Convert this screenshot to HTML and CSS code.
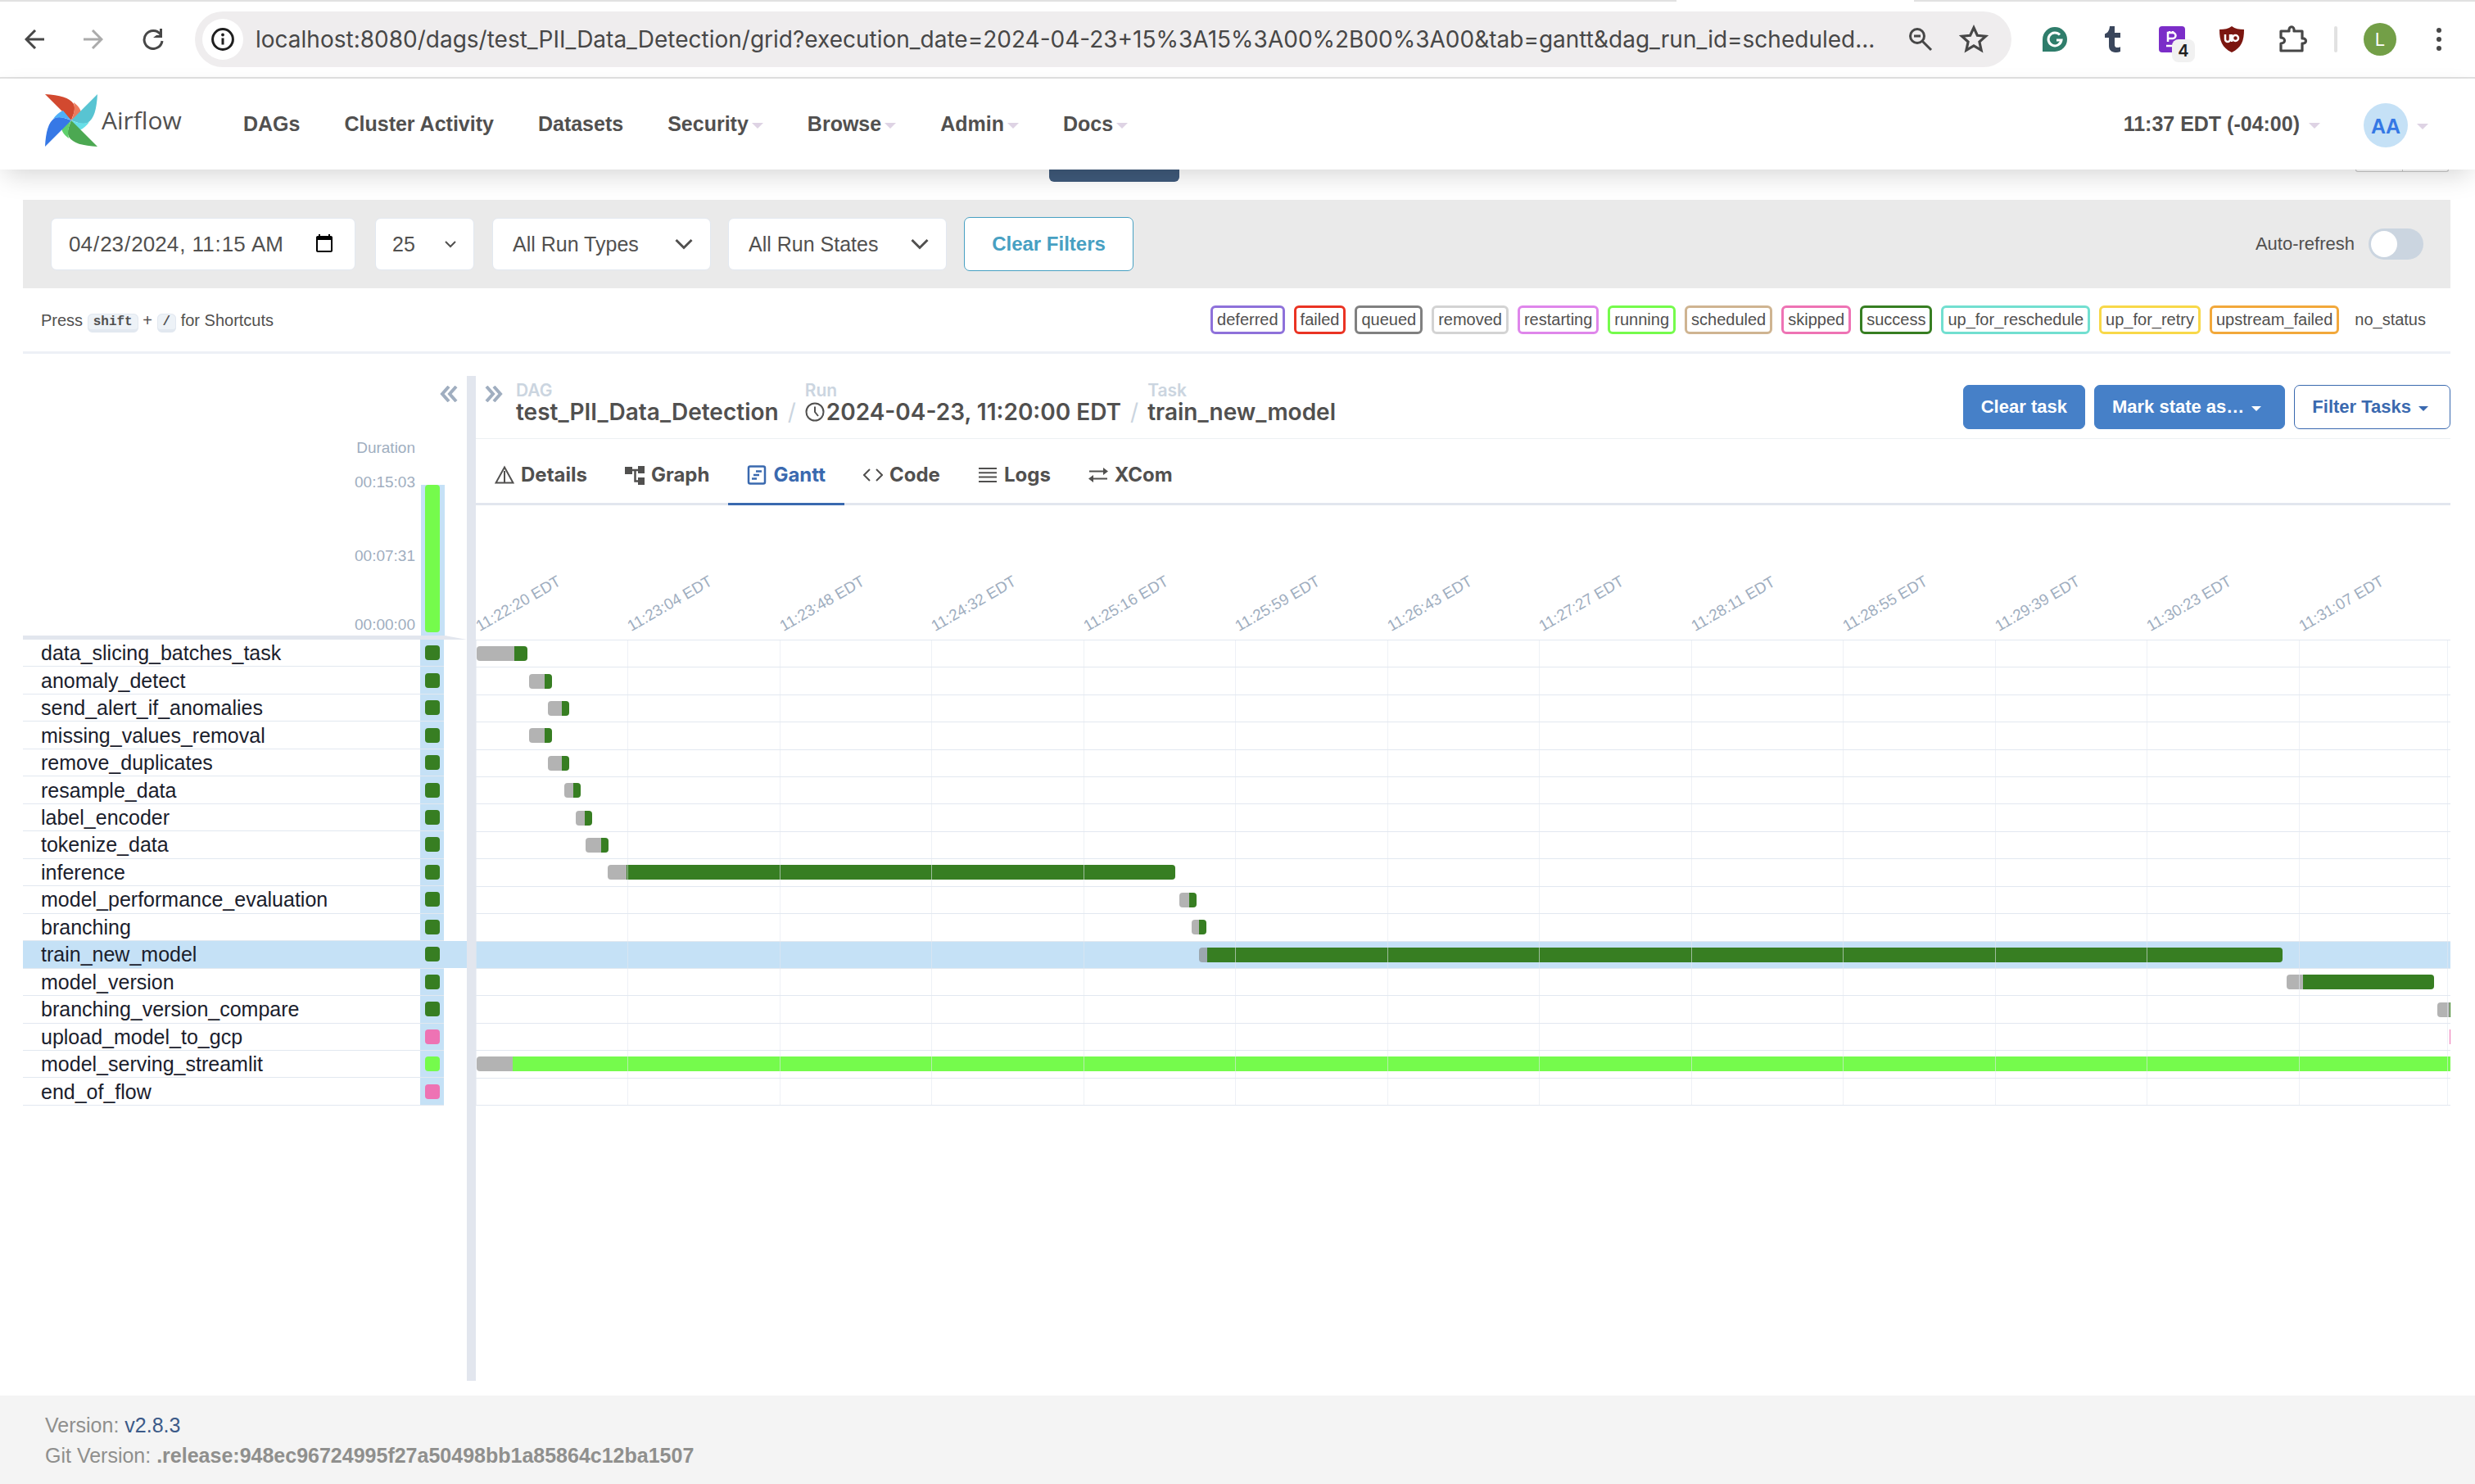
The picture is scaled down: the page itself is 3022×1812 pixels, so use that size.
FILE: index.html
```html
<!DOCTYPE html>
<html lang="en">
<head>
<meta charset="utf-8">
<title>test_PII_Data_Detection - Grid - Airflow</title>
<link rel="stylesheet" href="styles.css">
</head>
<body>
<div class="tabstrip"><span class="tabstrip-gap"></span></div>
<div class="browser">
  <div class="browser-nav">
    <button class="icon-btn" aria-label="Back"><svg width="24" height="24" viewBox="0 0 24 24"><path d="M13 1 2 12l11 11M2 12h22" fill="none" stroke="#474747" stroke-width="3"/></svg></button>
    <button class="icon-btn" aria-label="Forward"><svg width="24" height="24" viewBox="0 0 24 24"><path d="M11 1l11 11-11 11M22 12H0" fill="none" stroke="#ababab" stroke-width="3"/></svg></button>
    <button class="icon-btn" aria-label="Reload"><svg width="26" height="26" viewBox="0 0 26 26"><path d="M22 7a11 11 0 1 0 2 8" fill="none" stroke="#474747" stroke-width="3"/><path d="M24 0v11H13l4-3h4V0z" fill="#474747"/></svg></button>
  </div>
  <div class="omnibox">
    <button class="site-info" aria-label="Site information"><svg width="28" height="28" viewBox="0 0 28 28"><circle cx="14" cy="14" r="12.4" fill="none" stroke="#1f1f1f" stroke-width="3"/><path d="M14 12.500v8" stroke="#1f1f1f" stroke-width="3"/><circle cx="14" cy="8.500" r="1.900" fill="#1f1f1f"/></svg></button>
    <input class="url" type="text" aria-label="Address" value="localhost:8080/dags/test_PII_Data_Detection/grid?execution_date=2024-04-23+15%3A15%3A00%2B00%3A00&amp;tab=gantt&amp;dag_run_id=scheduled...">
    <button class="icon-btn" aria-label="Zoom"><svg width="30" height="30" viewBox="0 0 30 30"><circle cx="11" cy="11" r="8.500" fill="none" stroke="#474747" stroke-width="3"/><path d="M17 17l11 11M7 11h8" stroke="#474747" stroke-width="3"/></svg></button>
    <button class="icon-btn" aria-label="Bookmark"><svg width="36" height="36" viewBox="0 0 24 24"><path d="M12 2.500l2.900 6.300 6.800.7-5.100 4.600 1.500 6.800L12 17.300l-6.100 3.600 1.500-6.800-5.100-4.600 6.800-.7z" fill="none" stroke="#474747" stroke-width="2.100"/></svg></button>
  </div>
  <div class="extensions">
    <svg width="30" height="30" viewBox="0 0 30 30"><path d="M15 0a15 15 0 1 1 0 30H0V15A15 15 0 0 1 15 0z" fill="#2f7d6b"/><path d="M21 9.500a8 8 0 1 0 2 6.500h-6" fill="none" stroke="#fff" stroke-width="3"/></svg>
    <svg width="20" height="32" viewBox="0 0 20 32"><path d="M6 0h6v8h7v6h-7v9c0 3 3 4 7 2.200V31c-7 2.500-14 .5-14-7V14H0V9.500C4 8 5.500 5 6 0z" fill="#3a465c"/></svg>
    <span class="ext-badge">
      <svg width="32" height="32" viewBox="0 0 32 32"><rect width="32" height="32" rx="4" fill="#7b2dc8"/><path d="M11 19V8h6a3.500 3.500 0 0 1 0 7h-6M9 24h8M13 6v3M17 6v3" fill="none" stroke="#fff" stroke-width="2.500"/></svg>
      <span class="ext-count">4</span>
    </span>
    <svg class="ext-shield" width="30" height="32" viewBox="0 0 30 32"><path d="M15 0c4 3 9 4 15 4 0 14-3 22-15 28C3 26 0 18 0 4c6 0 11-1 15-4z" fill="#7b1610"/><path d="M7 10v6a3 3 0 0 0 6 0v-6M15 19V10" fill="none" stroke="#fff" stroke-width="2.500"/><circle cx="19.500" cy="14.500" r="3.500" fill="none" stroke="#fff" stroke-width="2.500"/></svg>
    <svg width="36" height="34" viewBox="0 0 36 34"><path d="M3 7h10c-1-7 7-7 6 0h10v9c6-1 6 7 0 6v9H3v-9c6 0 6-7 0-7z" fill="none" stroke="#474747" stroke-width="3.200" stroke-linejoin="round"/></svg>
    <span class="ext-sep"></span>
    <span class="profile">L</span>
    <svg width="6" height="30" viewBox="0 0 6 30"><circle cx="3" cy="4" r="3" fill="#474747"/><circle cx="3" cy="15" r="3" fill="#474747"/><circle cx="3" cy="26" r="3" fill="#474747"/></svg>
  </div>
</div>

<header class="navbar">
  <a class="brand" href="#">
    <svg width="64" height="64" viewBox="0 0 64 64">
      <path d="M0 0c18 1 30 4 35 12 3 7-1 14-3 20z" fill="#d2492f"/><path d="M35 10c4 3 8 7 9 12l-12 10c3-7 5-13 3-22z" fill="#ee7a5c"/>
      <path d="M64 0c-1 18-4 30-12 35-7 3-14-1-20-3z" fill="#58c4d2"/><path d="M54 34c-3 4-7 8-12 10L32 32c7 3 14 5 22 2z" fill="#66dfe8"/>
      <path d="M64 64c-18-1-30-4-35-12-3-7 1-14 3-20z" fill="#4ca852"/><path d="M29 54c-4-3-8-7-9-12l12-10c-3 7-5 13-3 22z" fill="#5fd06c"/>
      <path d="M0 64c1-18 4-30 12-35 7-3 14 1 20 3z" fill="#3678e6"/><path d="M10 30c3-4 7-8 12-10l10 12c-7-3-14-5-22-2z" fill="#4fb0f8"/>
    </svg>
    <span>Airflow</span>
  </a>
  <nav class="menu">
    <a href="#">DAGs</a>
    <a href="#">Cluster Activity</a>
    <a href="#">Datasets</a>
    <a href="#">Security<i class="caret"></i></a>
    <a href="#">Browse<i class="caret"></i></a>
    <a href="#">Admin<i class="caret"></i></a>
    <a href="#">Docs<i class="caret"></i></a>
  </nav>
  <a class="clock" href="#">11:37 EDT (-04:00)<i class="caret"></i></a>
  <a class="user" href="#"><span class="avatar">AA</span><i class="caret"></i></a>
</header>

<div class="scrolled-under">
  <span class="under-button"></span>
  <span class="under-group"><span></span><span></span></span>
</div>

<main class="page">
  <form class="filters">
    <input class="field date" type="datetime-local" aria-label="Base date" value="2024-04-23T11:15">
    <span class="select-wrap count"><select class="field" aria-label="Number of runs"><option>25</option></select>
      <svg class="chev" width="14" height="10" viewBox="0 0 14 10"><path d="M1 2l6 6 6-6" fill="none" stroke="#51504f" stroke-width="2"/></svg></span>
    <span class="select-wrap kind"><select class="field" aria-label="Run types"><option>All Run Types</option></select>
      <svg class="chev" width="22" height="14" viewBox="0 0 22 14"><path d="M1.500 2l9.500 9.500L20.500 2" fill="none" stroke="#51504f" stroke-width="3"/></svg></span>
    <span class="select-wrap kind"><select class="field" aria-label="Run states"><option>All Run States</option></select>
      <svg class="chev" width="22" height="14" viewBox="0 0 22 14"><path d="M1.500 2l9.500 9.500L20.500 2" fill="none" stroke="#51504f" stroke-width="3"/></svg></span>
    <button class="clear-filters" type="button">Clear Filters</button>
    <label class="auto">Auto-refresh<input class="switch" type="checkbox"></label>
  </form>

  <div class="legend">
    <p class="shortcuts">Press <kbd>shift</kbd> + <kbd>/</kbd> for Shortcuts</p>
    <span class="state deferred">deferred</span>
    <span class="state failed">failed</span>
    <span class="state queued">queued</span>
    <span class="state removed">removed</span>
    <span class="state restarting">restarting</span>
    <span class="state running">running</span>
    <span class="state scheduled">scheduled</span>
    <span class="state skipped">skipped</span>
    <span class="state success">success</span>
    <span class="state reschedule">up_for_reschedule</span>
    <span class="state retry">up_for_retry</span>
    <span class="state upstream">upstream_failed</span>
    <span class="state none">no_status</span>
  </div>

  <div class="panels">
    <section class="grid-panel">
      <div class="grid-head">
        <button class="icon-btn collapse" aria-label="Collapse grid"><svg width="22" height="20" viewBox="0 0 22 20"><path d="M11 1 3 10l8 9M20 1l-8 9 8 9" fill="none" stroke="#a0aec0" stroke-width="4"/></svg></button>
        <div class="duration">
          <div class="axis"><span class="axis-title">Duration</span><span class="axis-max">00:15:03</span><span class="axis-mid">00:07:31</span><span class="axis-min">00:00:00</span></div>
          <div class="run-col"><span class="run-bar"></span></div>
        </div>
      </div>
      <div class="rail"></div>
      <table class="tasks">
        <tr><td>data_slicing_batches_task</td><td><i class="sq"></i></td><td></td></tr>
        <tr><td>anomaly_detect</td><td><i class="sq"></i></td><td></td></tr>
        <tr><td>send_alert_if_anomalies</td><td><i class="sq"></i></td><td></td></tr>
        <tr><td>missing_values_removal</td><td><i class="sq"></i></td><td></td></tr>
        <tr><td>remove_duplicates</td><td><i class="sq"></i></td><td></td></tr>
        <tr><td>resample_data</td><td><i class="sq"></i></td><td></td></tr>
        <tr><td>label_encoder</td><td><i class="sq"></i></td><td></td></tr>
        <tr><td>tokenize_data</td><td><i class="sq"></i></td><td></td></tr>
        <tr><td>inference</td><td><i class="sq"></i></td><td></td></tr>
        <tr><td>model_performance_evaluation</td><td><i class="sq"></i></td><td></td></tr>
        <tr><td>branching</td><td><i class="sq"></i></td><td></td></tr>
        <tr class="selected"><td>train_new_model</td><td><i class="sq"></i></td><td></td></tr>
        <tr><td>model_version</td><td><i class="sq"></i></td><td></td></tr>
        <tr><td>branching_version_compare</td><td><i class="sq"></i></td><td></td></tr>
        <tr><td>upload_model_to_gcp</td><td><i class="sq is-skipped"></i></td><td></td></tr>
        <tr><td>model_serving_streamlit</td><td><i class="sq is-running"></i></td><td></td></tr>
        <tr><td>end_of_flow</td><td><i class="sq is-skipped"></i></td><td></td></tr>
      </table>
    </section>

    <div class="divider"></div>

    <section class="detail">
      <div class="detail-head">
        <button class="icon-btn expand" aria-label="Expand details"><svg width="22" height="20" viewBox="0 0 22 20"><path d="M2 1l8 9-8 9M11 1l8 9-8 9" fill="none" stroke="#a0aec0" stroke-width="4"/></svg></button>
        <div class="crumbs">
          <div class="crumb"><span>DAG</span><a href="#">test_PII_Data_Detection</a></div>
          <i class="slash">/</i>
          <div class="crumb"><span>Run</span><a href="#"><svg width="24" height="24" viewBox="0 0 24 24"><circle cx="12" cy="12" r="10.500" fill="none" stroke="#51504f" stroke-width="2"/><path d="M12 5.500V12l4 5" fill="none" stroke="#51504f" stroke-width="2"/></svg>2024-04-23, 11:20:00 EDT</a></div>
          <i class="slash">/</i>
          <div class="crumb"><span>Task</span><a href="#">train_new_model</a></div>
        </div>
        <div class="actions">
          <button class="btn solid">Clear task</button>
          <button class="btn solid">Mark state as…<i class="caret"></i></button>
          <button class="btn outline">Filter Tasks<i class="caret"></i></button>
        </div>
      </div>

      <div class="tabs">
        <button class="tab"><svg width="24" height="24" viewBox="0 0 24 24"><path d="M12 2.500 22.500 21.500h-21z" fill="none" stroke="#51504f" stroke-width="2"/><path d="M12 7v14" stroke="#51504f" stroke-width="2"/></svg>Details</button>
        <button class="tab"><svg width="24" height="24" viewBox="0 0 24 24"><path d="M0 2h9v9H0zM16 1h8v9h-8zM16 15h8v9h-8z" fill="#51504f"/><path d="M8 6h9M12.500 6v13.500H17" fill="none" stroke="#51504f" stroke-width="2.500"/></svg>Graph</button>
        <button class="tab active"><svg width="24" height="24" viewBox="0 0 24 24"><rect x="2" y="1.500" width="20" height="21" rx="2" fill="none" stroke="#3a69af" stroke-width="2.500"/><path d="M11 7.500h7M8 12h7M6 16.500h6" stroke="#3a69af" stroke-width="2.500"/></svg>Gantt</button>
        <button class="tab"><svg width="24" height="24" viewBox="0 0 24 24"><path d="M8 5l-7 7 7 7M16 5l7 7-7 7" fill="none" stroke="#51504f" stroke-width="2"/></svg>Code</button>
        <button class="tab"><svg width="24" height="24" viewBox="0 0 24 24"><path d="M1 4h22M1 9.300h22M1 14.600h22M1 20h22" stroke="#51504f" stroke-width="2"/></svg>Logs</button>
        <button class="tab"><svg width="24" height="24" viewBox="0 0 24 24"><path d="M1 7.500h19M23 16.500H4" stroke="#51504f" stroke-width="2"/><path d="M18 3l6 4.500-6 4.500zM6 12l-6 4.500L6 21z" fill="#51504f"/></svg>XCom</button>
      </div>

      <div class="gantt-axis">
        <span>11:22:20 EDT</span><span>11:23:04 EDT</span><span>11:23:48 EDT</span><span>11:24:32 EDT</span><span>11:25:16 EDT</span><span>11:25:59 EDT</span><span>11:26:43 EDT</span><span>11:27:27 EDT</span><span>11:28:11 EDT</span><span>11:28:55 EDT</span><span>11:29:39 EDT</span><span>11:30:23 EDT</span><span>11:31:07 EDT</span>
      </div>
      <div class="gantt">
        <div class="lane"><i class="wait" style="--from:1;--len:46"></i><i class="bar" style="--len:16"></i></div>
        <div class="lane"><i class="wait" style="--from:65;--len:19"></i><i class="bar" style="--len:9"></i></div>
        <div class="lane"><i class="wait" style="--from:88;--len:17"></i><i class="bar" style="--len:9"></i></div>
        <div class="lane"><i class="wait" style="--from:65;--len:19"></i><i class="bar" style="--len:9"></i></div>
        <div class="lane"><i class="wait" style="--from:88;--len:17"></i><i class="bar" style="--len:9"></i></div>
        <div class="lane"><i class="wait" style="--from:108;--len:11"></i><i class="bar" style="--len:9"></i></div>
        <div class="lane"><i class="wait" style="--from:122;--len:11"></i><i class="bar" style="--len:9"></i></div>
        <div class="lane"><i class="wait" style="--from:134;--len:19"></i><i class="bar" style="--len:9"></i></div>
        <div class="lane"><i class="wait" style="--from:161;--len:23"></i><i class="bar" style="--len:670"></i></div>
        <div class="lane"><i class="wait" style="--from:859;--len:12"></i><i class="bar" style="--len:9"></i></div>
        <div class="lane"><i class="wait" style="--from:874;--len:9"></i><i class="bar" style="--len:9"></i></div>
        <div class="lane selected"><i class="wait" style="--from:883;--len:10"></i><i class="bar" style="--len:1313"></i></div>
        <div class="lane"><i class="wait" style="--from:2211;--len:20"></i><i class="bar" style="--len:160"></i></div>
        <div class="lane"><i class="wait" style="--from:2395;--len:15"></i><i class="bar cut" style="--len:1"></i></div>
        <div class="lane"><i class="wait" style="--from:2410;--len:0"></i><i class="bar cut is-skipped" style="--len:1"></i></div>
        <div class="lane"><i class="wait" style="--from:1;--len:44"></i><i class="bar cut is-running" style="--len:2366"></i></div>
        <div class="lane"></div>
        <div class="ticks"><i></i><i></i><i></i><i></i><i></i><i></i><i></i><i></i><i></i><i></i><i></i><i></i><i></i></div>
      </div>
    </section>
  </div>
</main>

<footer class="footer">
  <div>Version: <a href="#">v2.8.3</a></div>
  <div>Git Version: <strong>.release:948ec96724995f27a50498bb1a85864c12ba1507</strong></div>
</footer>
</body>
</html>
```

FILE: styles.css
```css
:root {
  --text: #51504f;
  --line: #e2e8f0;
  --muted: #a0aec0;
  --pick: #c5e1f6;
  --success: #377e22;
  --running: #75fb4c;
  --skipped: #ee73b4;
  --ui: "Inter", "Liberation Sans", sans-serif;
}
* { box-sizing: border-box; }
body {
  margin: 0;
  min-height: 100vh;
  display: flex;
  flex-direction: column;
  background: #fff;
  color: var(--text);
  font: 25px/36px "Liberation Sans", Arial, sans-serif;
}
svg { display: block; flex: none; }
a { color: inherit; text-decoration: none; }
button, input, select { font: inherit; color: inherit; margin: 0; }
.icon-btn { padding: 0; border: 0; background: none; }

/* browser toolbar */
.tabstrip { height: 2px; background: #e1e1e1; display: flex; justify-content: flex-end; padding-right: 685px; }
.tabstrip-gap { width: 290px; background: #fff; }
.browser { height: 94px; border-bottom: 2px solid #e1e1e1; display: flex; align-items: center; padding: 0 41px 0 30px; }
.browser-nav { display: flex; align-items: center; gap: 48px; width: 208px; flex: none; }
.omnibox { flex: 1; height: 68px; border-radius: 34px; background: #efedee; display: flex; align-items: center; padding: 0 28px 0 9px; gap: 32px; }
.site-info { width: 50px; height: 50px; border: 0; border-radius: 50%; background: #fff; padding: 11px; margin-right: -17px; }
.url { flex: 1; min-width: 0; border: 0; padding: 0; background: none; color: #474747; font: 28px/36px var(--ui); }
.extensions { display: flex; align-items: center; gap: 46px; margin-left: 38px; }
.ext-badge { position: relative; margin-right: -4px; }
.ext-shield { margin-right: -4px; }
.ext-count { position: absolute; left: 16px; top: 16px; width: 28px; height: 28px; border-radius: 8px; background: #f1f1f1; color: #1f1f1f; font: 600 20px/28px var(--ui); text-align: center; }
.ext-sep { width: 4px; height: 32px; border-radius: 2px; background: #e1e1e1; margin: 0 -14px; }
.profile { width: 40px; height: 40px; margin-right: 3px; border-radius: 50%; background: #739f47; color: #fff; font: 22px/40px var(--ui); text-align: center; }

/* airflow navbar */
.navbar { position: relative; z-index: 2; height: 111px; background: #fff; display: flex; align-items: center; padding: 2px 57px 0 55px; font-weight: 700; line-height: 28px; box-shadow: 0 12px 30px -6px rgba(0, 0, 0, .17); }
.brand { display: flex; align-items: center; gap: 5px; width: 242px; padding-bottom: 12px; font: 400 30px/36px "Open Sans", "Noto Sans", sans-serif; }
.menu { display: flex; gap: 54px; flex: 1; }
.menu, .clock { padding-bottom: 3px; }
.menu a, .clock, .user { display: flex; align-items: center; }
.caret { border: 7px solid transparent; border-top-color: #ded3e4; border-bottom: 0; margin-left: 4px; margin-top: 4px; }
.clock .caret, .user .caret { margin-left: 11px; }
.user { margin-left: 53px; }
.avatar { width: 54px; height: 54px; border-radius: 50%; background: var(--pick); color: #3578e5; text-align: center; line-height: 56px; }

.scrolled-under { height: 37px; display: flex; justify-content: space-between; align-items: flex-start; padding: 0 32px 0 1281px; }
.under-button { width: 159px; height: 15px; border-radius: 0 0 6px 6px; background: #3f5a7b; }
.under-group { display: flex; width: 114px; height: 3px; border: 1px solid #c9c9c9; border-top: 0; border-radius: 0 0 5px 5px; }
.under-group span { flex: 1; }
.under-group span + span { border-left: 1px solid #c9c9c9; }

.page { flex: 1; display: flex; flex-direction: column; padding: 0 30px 18px 28px; }

/* filter bar */
.filters { height: 108px; background: #eaeaea; display: flex; align-items: center; padding: 0 33px 0 34px; }
.field { display: block; width: 100%; height: 64px; border: 1px solid #e2e8f0; border-radius: 7px; background: #fff; padding: 0 24px; appearance: none; }
.date { width: 372px; padding: 0 22px 0 20px; margin-right: 24px; font-size: 26px; }
.select-wrap { position: relative; }
.select-wrap .chev { position: absolute; right: 22px; top: 50%; transform: translateY(-50%); pointer-events: none; }
.count { width: 121px; margin-right: 22px; }
.count .field { padding: 0 20px; }
.kind { width: 267px; margin-right: 21px; }
.clear-filters { width: 207px; height: 66px; border: 1px solid #47a0c2; border-radius: 7px; background: #fff; color: #47a0c2; font-weight: 700; font-size: 24px; }
.auto { margin-left: auto; display: flex; align-items: center; gap: 17px; font-size: 22px; }
.switch { appearance: none; width: 67px; height: 38px; border-radius: 19px; background: #cbd5e0; padding: 3px; }
.switch::before { content: ""; display: block; width: 32px; height: 32px; border-radius: 50%; background: #fff; }

/* legend */
.legend { height: 80px; border-bottom: 3px solid #edf0f6; display: flex; align-items: center; gap: 11px; padding: 0 22px; font-size: 20px; line-height: 28px; }
.shortcuts { margin: 0 auto 0 0; }
kbd { font: 700 16px/20px "Liberation Mono", monospace; background: #edf2f7; border: 1px solid #e2e8f0; border-bottom-width: 4px; border-radius: 6px; padding: 0 6px; vertical-align: 1px; }
.state { border: 3px solid; border-radius: 6px; padding: 0 5px; height: 35px; border-color: transparent; }
.deferred { border-color: #8e71da; }
.failed { border-color: #ea3323; }
.queued { border-color: #808080; }
.removed { border-color: #d3d3d3; }
.restarting { border-color: #df86eb; }
.running { border-color: var(--running); }
.scheduled { border-color: #cfb491; }
.skipped { border-color: var(--skipped); }
.success { border-color: var(--success); }
.reschedule { border-color: #72dfd0; }
.retry { border-color: #f8d849; }
.upstream { border-color: #f2a83b; }

/* grid panel */
.panels { flex: 1; display: flex; padding-top: 27px; }
.grid-panel { width: 542px; flex: none; }
.divider { width: 11px; background: #e2e6ee; flex: none; }
.grid-head { height: 317px; display: flex; flex-direction: column; padding: 12px 27px 0 0; }
.collapse { align-self: flex-end; margin-right: -16px; }
.duration { flex: 1; display: flex; justify-content: flex-end; align-items: flex-end; gap: 7px; }
.axis { display: flex; flex-direction: column; text-align: right; color: var(--muted); font-size: 19px; line-height: 20px; padding-bottom: 3px; }
.axis-max { margin-top: 22px; }
.axis-mid { margin-top: 70px; }
.axis-min { margin-top: 64px; }
.run-col { width: 29px; height: 184px; background: var(--pick); padding: 0 6px 0 5px; }
.run-bar { display: block; height: 180px; border-radius: 4px; background: var(--running); }
.rail { height: 5px; background: #e2e6ee; clip-path: polygon(0 0, 515px 0, 100% 100%, 0 100%); }
.tasks { width: 100%; height: 569px; border-collapse: collapse; table-layout: fixed; color: #1a202c; line-height: 30px; }
.tasks td { padding: 0; border-bottom: 1px solid var(--line); }
.tasks td:first-child { width: 485px; padding-left: 22px; }
.tasks td:nth-child(2) { width: 29px; background: var(--pick); padding-left: 6px; }
.tasks td:last-child { border: 0; }
.tasks .selected td { background: var(--pick); }
.sq { display: block; width: 18px; height: 18px; border-radius: 4px; background: var(--success); }
.is-skipped { background: var(--skipped) !important; }
.is-running { background: var(--running) !important; }

/* detail panel */
.detail { flex: 1; min-width: 0; }
.detail-head { height: 77px; border-bottom: 1px solid #edf0f3; display: flex; align-items: flex-start; padding-left: 11px; }
.expand { margin: 12px 16px 0 0; }
.crumbs { display: flex; align-items: flex-end; font: 600 28px/28px var(--ui); padding-top: 6px; }
.crumb { display: flex; flex-direction: column; }
.crumb span { font-size: 21px; line-height: 24px; color: #cbd5e0; }
.crumb a { display: flex; align-items: center; gap: 2px; }
.slash { font-weight: 400; font-style: normal; color: #cbd5e0; padding: 0 11px; }
.actions { display: flex; gap: 11px; margin-left: auto; padding-top: 11px; }
.btn { height: 54px; border: 1px solid #4680c8; border-radius: 7px; padding: 0 21px; font-weight: 700; font-size: 22px; display: flex; align-items: center; }
.btn .caret { border-width: 6px; border-bottom: 0; border-top-color: currentColor; margin: 4px 7px 0 9px; }
.solid { background: #4680c8; color: #fff; }
.outline { background: #fff; color: #3a69af; border-color: #3a69af; padding-right: 19px; }
.tabs { display: flex; height: 81px; border-bottom: 3px solid #e2e6ee; }
.tab { display: flex; align-items: center; gap: 8px; height: 81px; padding: 9px 23px 0; border: 0; border-bottom: 3px solid transparent; background: none; font: 700 24px/30px var(--ui); }
.active { color: #3a69af; border-color: #3a69af; }

/* gantt chart */
.gantt-axis { height: 164px; display: grid; grid-template-columns: repeat(13, 1fr); align-items: end; color: var(--muted); font-size: 19px; line-height: 20px; }
.gantt-axis span { white-space: nowrap; transform: rotate(-30deg); transform-origin: 0 100%; padding: 0 0 2px 9px; }
.gantt { position: relative; height: 569px; display: grid; grid-template-rows: repeat(17, 1fr); border-top: 1px solid var(--line); }
.lane { display: flex; align-items: center; border-bottom: 1px solid var(--line); min-height: 0; overflow: hidden; }
.lane.selected { background: var(--pick); }
.wait, .bar { height: 18px; width: calc(var(--len) / 2411 * 100%); flex: none; }
.wait { margin-left: calc(var(--from) / 2411 * 100%); background: rgba(128, 128, 128, .6); border-radius: 4px 0 0 4px; }
.bar { background: var(--success); border-radius: 0 4px 4px 0; }
.cut { border-radius: 0; }
.ticks { position: absolute; inset: 0; display: grid; grid-template-columns: repeat(13, 1fr); pointer-events: none; }
.ticks i { border-left: 1px solid rgba(226, 232, 240, .6); }
.ticks i:last-child { margin-right: 3px; border-right: 1px solid rgba(226, 232, 240, .6); }

.footer { height: 108px; background: #f4f4f4; color: #8f8f8d; padding: 18px 55px; line-height: 37px; }
.footer a { color: #3c5a88; }
```
